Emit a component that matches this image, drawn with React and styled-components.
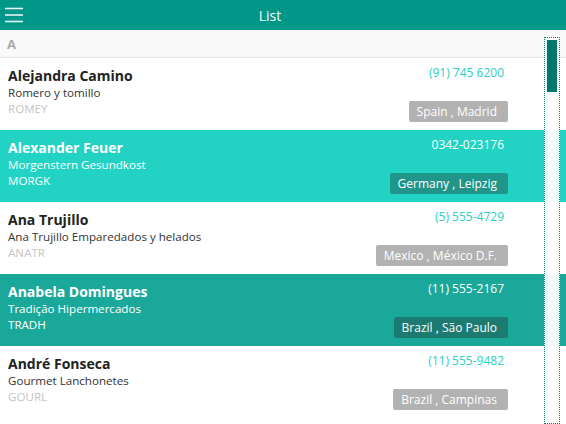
import React from "react";
import styled, { createGlobalStyle } from "styled-components";

const Global = createGlobalStyle`
  html, body { margin: 0; padding: 0; background: #fff; }
  body { font-family: "Open Sans", "Noto Sans", sans-serif; overflow: hidden; }
  * { box-sizing: border-box; }
`;

const Page = styled.div`
  width: 566px;
  height: 424px;
  display: flex;
  flex-direction: column;
  overflow: hidden;
`;

const Header = styled.header`
  height: 30px;
  background: #009688;
  display: flex;
  align-items: center;
  position: relative;
  flex-shrink: 0;
`;

const MenuButton = styled.button`
  border: 0;
  background: transparent;
  padding: 0 0 0 5px;
  height: 30px;
  display: flex;
  align-items: center;
`;

const Title = styled.div`
  flex: 1;
  text-align: center;
  color: #fff;
  font-size: 14px;
  padding-right: 50px;
`;

const Body = styled.div`
  flex: 1;
  position: relative;
  overflow: hidden;
`;

const GroupHeader = styled.div`
  height: 28px;
  background: #f9f9f9;
  border-bottom: 1px solid #e6e6e6;
  padding: 5px 7px 0;
  font-size: 13px;
  font-weight: 700;
  color: #aaa;
`;

const Row = styled.div`
  height: 72px;
  display: flex;
  background: ${(p) => p.$bg || "#fff"};
  padding: 0 58px 0 8px;
  position: relative;
`;

const Left = styled.div`
  flex: 1;
  padding-top: 8px;
  display: flex;
  flex-direction: column;
`;

const Name = styled.div`
  font-size: 14px;
  font-weight: 700;
  line-height: 19px;
  color: ${(p) => (p.$sel ? "#fff" : "#222")};
`;

const Company = styled.div`
  font-size: 11.6px;
  line-height: 16px;
  color: ${(p) => (p.$sel ? "#fff" : "#333")};
`;

const Code = styled.div`
  font-size: 11.6px;
  line-height: 16px;
  color: ${(p) => (p.$sel ? "#fff" : "#c4c4c4")};
`;

const Right = styled.div`
  display: flex;
  flex-direction: column;
  align-items: flex-end;
  justify-content: space-between;
  padding: 6px 0 8px;
`;

const Phone = styled.div`
  font-size: 12px;
  line-height: 17px;
  margin-right: 4px;
  color: ${(p) => (p.$sel ? "#fff" : "#2ad0c2")};
`;

const Badge = styled.div`
  font-size: 12px;
  line-height: 21px;
  height: 21px;
  padding: 0 11px 0 8px;
  border-radius: 2px;
  color: #fff;
  background: ${(p) => p.$bg};
`;

const Chevron = styled.svg`
  position: absolute;
  right: 14px;
  top: 30px;
`;

const Track = styled.div`
  position: absolute;
  right: 6px;
  top: 7px;
  bottom: 0;
  width: 16px;
  border: 1px dotted #00796b;
  background: rgba(255, 255, 255, 0.93);
  padding: 2px;
`;

const Thumb = styled.div`
  width: 10px;
  height: 52px;
  background: #00796b;
`;

const items = [
  { name: "Alejandra Camino", company: "Romero y tomillo", code: "ROMEY", phone: "(91) 745 6200", loc: "Spain , Madrid" },
  { name: "Alexander Feuer", company: "Morgenstern Gesundkost", code: "MORGK", phone: "0342-023176", loc: "Germany , Leipzig", sel: "light" },
  { name: "Ana Trujillo", company: "Ana Trujillo Emparedados y helados", code: "ANATR", phone: "(5) 555-4729", loc: "Mexico , México D.F." },
  { name: "Anabela Domingues", company: "Tradição Hipermercados", code: "TRADH", phone: "(11) 555-2167", loc: "Brazil , São Paulo", sel: "dark" },
  { name: "André Fonseca", company: "Gourmet Lanchonetes", code: "GOURL", phone: "(11) 555-9482", loc: "Brazil , Campinas" },
];

const rowBg = { light: "#22d3c4", dark: "#1aa89a" };
const badgeBg = { light: "#20968a", dark: "#1d7a70" };

export default function App() {
  return (
    <Page>
      <Global />
      <Header>
        <MenuButton aria-label="menu">
          <svg width="19" height="16" viewBox="0 0 19 16">
            <g stroke="#e6f5f3" strokeWidth="1.6">
              <line x1="0" y1="1.5" x2="18" y2="1.5" />
              <line x1="0" y1="8" x2="18" y2="8" />
              <line x1="0" y1="14.5" x2="18" y2="14.5" />
            </g>
          </svg>
        </MenuButton>
        <Title>List</Title>
      </Header>
      <Body>
        <GroupHeader>A</GroupHeader>
        {items.map((it) => (
          <Row key={it.code} $bg={it.sel ? rowBg[it.sel] : "#fff"}>
            <Left>
              <Name $sel={!!it.sel}>{it.name}</Name>
              <Company $sel={!!it.sel}>{it.company}</Company>
              <Code $sel={!!it.sel}>{it.code}</Code>
            </Left>
            <Right>
              <Phone $sel={!!it.sel}>{it.phone}</Phone>
              <Badge $bg={it.sel ? badgeBg[it.sel] : "#b2b2b2"}>{it.loc}</Badge>
            </Right>
            <Chevron width="7" height="12" viewBox="0 0 7 12">
              <path d="M1 1 L6 6 L1 11" fill="none" stroke={it.sel ? "#fff" : "#ccc"} strokeWidth="1.5" />
            </Chevron>
          </Row>
        ))}
        <Track>
          <Thumb />
        </Track>
      </Body>
    </Page>
  );
}
